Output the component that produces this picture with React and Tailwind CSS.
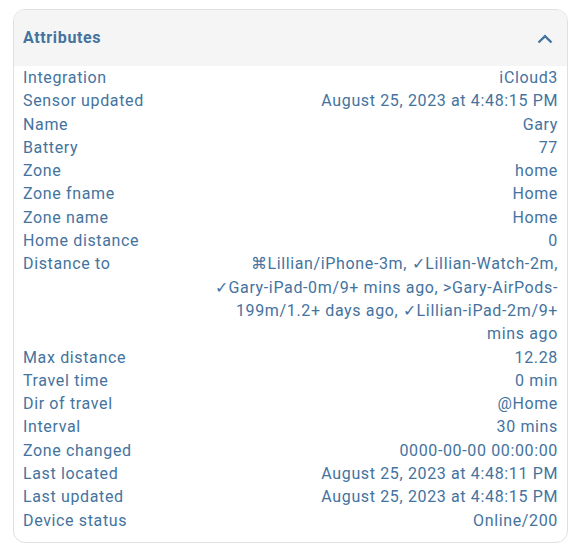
const rows = [
  ['Integration', 'iCloud3'],
  ['Sensor updated', 'August 25, 2023 at 4:48:15 PM'],
  ['Name', 'Gary'],
  ['Battery', '77'],
  ['Zone', 'home'],
  ['Zone fname', 'Home'],
  ['Zone name', 'Home'],
  ['Home distance', '0'],
  ['Distance to', '⌘Lillian/iPhone-3m, ✓Lillian-Watch-2m, ✓Gary-iPad-0m/9+ mins ago, >Gary-AirPods-199m/1.2+ days ago, ✓Lillian-iPad-2m/9+ mins ago'],
  ['Max distance', '12.28'],
  ['Travel time', '0 min'],
  ['Dir of travel', '@Home'],
  ['Interval', '30 mins'],
  ['Zone changed', '0000-00-00 00:00:00'],
  ['Last located', 'August 25, 2023 at 4:48:11 PM'],
  ['Last updated', 'August 25, 2023 at 4:48:15 PM'],
  ['Device status', 'Online/200'],
];

export default function App() {
  return (
    <div className="w-[575px] h-[550px] bg-white pt-[9px] pl-[13px] font-['Roboto',sans-serif] text-[#44739e] tracking-[0.04em]">
      <div className="w-[555px] border border-[#e0e0e0] rounded-[12px] overflow-hidden">
        {/* header */}
        <div className="h-[56px] bg-[#f5f5f5] flex items-center justify-between pl-[9px] pr-[14px]">
          <span className="text-[16px] font-bold">Attributes</span>
          <svg width="16" height="10" viewBox="0 0 16 10" className="mt-[1px]">
            <path d="M1.5 8.5 L8 2.2 L14.5 8.5" fill="none" stroke="#44739e" strokeWidth="2.4" />
          </svg>
        </div>
        {/* attribute rows */}
        <div className="pl-[9px] pr-[9px] pb-[10px] text-[16px] leading-[23.3px]">
          {rows.map(([k, v]) => (
            <div key={k} className="flex justify-between gap-4">
              <div className="shrink-0">{k}</div>
              <div className="text-right max-w-[346px]">{v}</div>
            </div>
          ))}
        </div>
      </div>
    </div>
  );
}
